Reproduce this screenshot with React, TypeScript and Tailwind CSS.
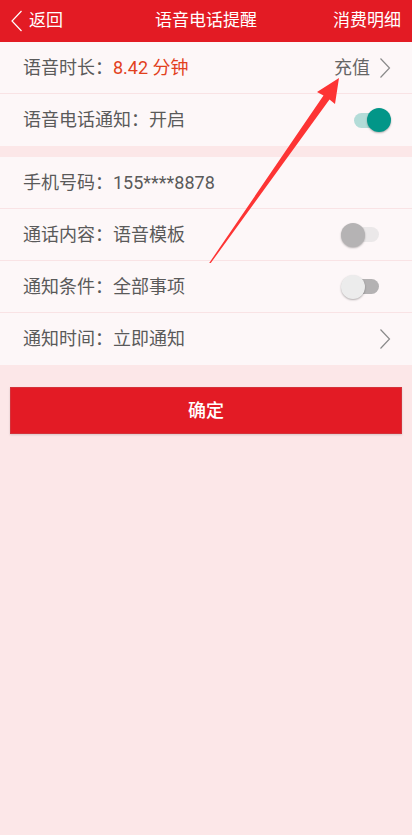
import { ReactNode } from 'react';

const Chevron = () => (
  <svg width="12" height="22" viewBox="0 0 12 22" className="shrink-0">
    <path d="M1.5 1.5 L10.5 11 L1.5 20.5" fill="none" stroke="#8a8a8a" strokeWidth="1.2" />
  </svg>
);

const Toggle = ({ mode }: { mode: 'on' | 'gray' | 'light' }) => {
  if (mode === 'on') {
    return (
      <div className="relative w-[40px] h-[26px] flex items-center">
        <div className="ml-[3px] w-[30px] h-[15px] rounded-full bg-[#b3dcd8]" />
        <div className="absolute right-0 top-[1px] w-[24px] h-[24px] rounded-full bg-[#029688] shadow-[0_1px_2px_rgba(0,0,0,0.3)]" />
      </div>
    );
  }
  return (
    <div className="relative w-[38px] h-[26px] mr-[12px] flex items-center">
      <div
        className={
          'ml-[8px] w-[30px] h-[15px] rounded-full ' + (mode === 'gray' ? 'bg-[#ebe8e9]' : 'bg-[#b4b2b3]')
        }
      />
      <div
        className={
          'absolute left-0 top-[1px] w-[24px] h-[24px] rounded-full shadow-[0_1px_2px_rgba(0,0,0,0.3)] ' +
          (mode === 'gray' ? 'bg-[#b5b3b4]' : 'bg-[#ececec]')
        }
      />
    </div>
  );
};

const Row = ({ children, right, last }: { children: ReactNode; right?: ReactNode; last?: boolean }) => (
  <div
    className={
      'h-[52px] flex items-center justify-between pl-[23px] pr-[21px] bg-[#fdf7f8] ' +
      (last ? '' : 'border-b border-[#f9e3e5]')
    }
  >
    <div className="text-[18px] text-[#5a5a5a] leading-none">{children}</div>
    {right}
  </div>
);

export default function App() {
  return (
    <div
      className="relative w-[412px] h-[835px] bg-[#fce7e8] overflow-hidden"
      style={{ fontFamily: 'Roboto, "Noto Sans CJK SC", sans-serif' }}
    >
      {/* header */}
      <div className="h-[42px] bg-[#e31b24] flex items-center justify-between px-[10px] text-white text-[17px]">
        <div className="flex items-center gap-[6px] w-[100px]">
          <svg width="13" height="22" viewBox="0 0 13 22">
            <path d="M11.5 1 L2 11 L11.5 21" fill="none" stroke="#fff" strokeWidth="1.2" />
          </svg>
          <span>返回</span>
        </div>
        <div className="flex-1 text-center">语音电话提醒</div>
        <div className="w-[100px] text-right pr-[1px]">消费明细</div>
      </div>

      <div className="bg-[#fdf7f8]">
        <Row
          right={
            <div className="flex items-center gap-[9px] text-[18px] text-[#666]">
              <span>充值</span>
              <Chevron />
            </div>
          }
        >
          语音时长：<span className="text-[#e2411d]">8.42 分钟</span>
        </Row>
        <Row last right={<Toggle mode="on" />}>
          语音电话通知：开启
        </Row>
      </div>

      <div className="h-[11px]" />

      <div className="bg-[#fdf7f8]">
        <Row>手机号码：155****8878</Row>
        <Row right={<Toggle mode="gray" />}>通话内容：语音模板</Row>
        <Row right={<Toggle mode="light" />}>通知条件：全部事项</Row>
        <Row last right={<Chevron />}>
          通知时间：立即通知
        </Row>
      </div>

      <div className="px-[10px] pt-[22px]">
        <button className="w-full h-[47px] bg-[#e31b25] border border-[#d4323a] shadow-[0_1px_2px_rgba(0,0,0,0.15)] text-white text-[18px] font-medium">
          确定
        </button>
      </div>

      {/* annotation arrow */}
      <svg className="absolute left-0 top-0 pointer-events-none" width="412" height="835">
        <polygon
          points="339,78 335,104 329.5,99.5 210.8,263 209.2,263 323.5,95.5 317,92"
          fill="#fd3434"
        />
      </svg>
    </div>
  );
}
